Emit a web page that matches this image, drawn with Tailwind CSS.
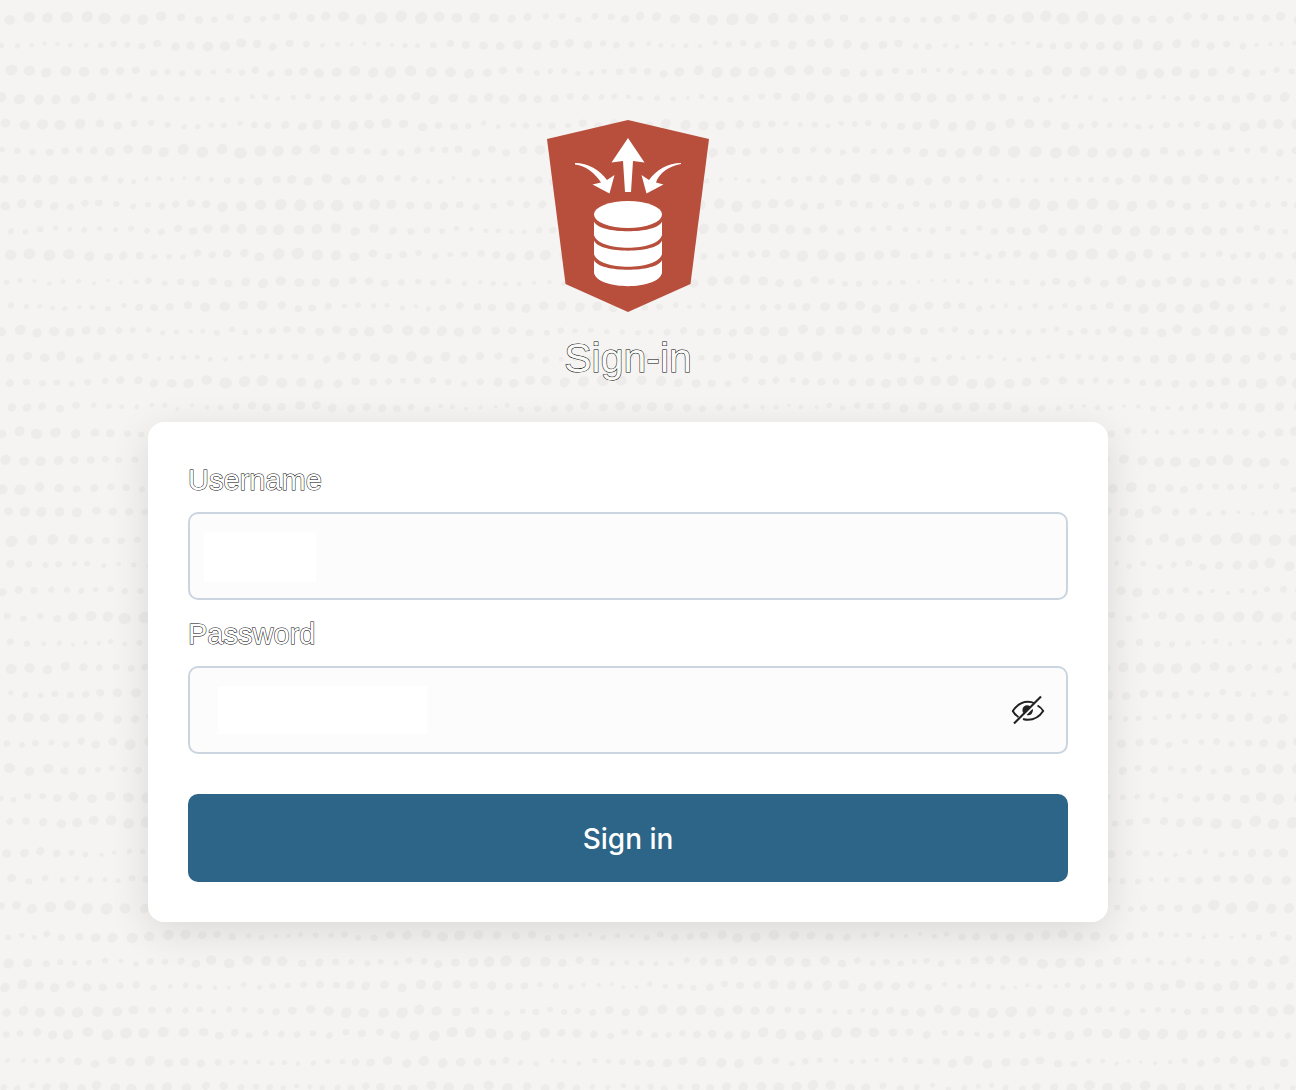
<!DOCTYPE html>
<html lang="en">
<head>
<meta charset="utf-8">
<meta name="viewport" content="width=device-width, initial-scale=1">
<title>Sign-in</title>
<script src="https://cdn.jsdelivr.net/npm/@tailwindcss/browser@4"></script>
</head>
<body class="relative isolate min-h-screen overflow-x-hidden bg-[#f5f4f2] font-['Liberation_Sans',sans-serif]">
<svg id="dots" class="absolute inset-0 -z-10 h-full w-full fill-[#edecea]" aria-hidden="true"></svg>
<main class="flex flex-col items-center pt-30 pr-10 pb-42">
  <svg class="h-48 w-[162px]" viewBox="0 0 162 192" role="img" aria-label="Database logo">
    <path fill="#b84f3c" d="M81 0 162 19 143.500 164 81 192 18.500 164 0 19Z"/>
    <g fill="#fff">
      <path d="M81 18 97.500 42.500 86 41 84 72H78L76 41 64.500 42.500Z"/>
      <path d="M28 43C41 43 53 50 60 60L67.500 55 62.500 73.500 45.500 64.500 54 62.500C48 53 39 46 28 44.500Z"/>
      <path d="M134 43C121 43 109 50 102 60L94.500 55 99.500 73.500 116.500 64.500 109 62.500C112 53 122 46 134 44Z"/>
      <ellipse cx="81" cy="94.500" rx="34" ry="13.500"/>
      <path d="M47 101.500C52 114.500 110 114.500 115 101.500V115C111 132 51 132 47 115Z"/>
      <path d="M47 120.500C52 134 110 134 115 120.500V134C111 151 51 151 47 134Z"/>
      <path d="M47 140C52 153 110 153 115 140V153C111 170.500 51 170.500 47 153Z"/>
    </g>
  </svg>
  <h1 class="mt-5 text-[41px] leading-[52px] text-[#f9f9f8] [paint-order:stroke_fill] [-webkit-text-stroke:1px_#000]">Sign-in</h1>
  <form class="mt-[38px] flex w-full max-w-[960px] flex-col rounded-2xl bg-white p-10 shadow-[0_10px_40px_rgba(0,0,0,0.11)]">
    <label for="username" class="mt-[2px] text-[29px] leading-8 text-white [paint-order:stroke_fill] [-webkit-text-stroke:1px_#000]">Username</label>
    <div class="relative mt-4">
      <input id="username" type="text" class="block h-[88px] w-full rounded-[10px] border-2 border-[#cbd5e0] bg-[#fcfcfc] px-4 text-[28px] text-slate-800">
      <span class="pointer-events-none absolute top-5 left-4 h-[50px] w-28 bg-white"></span>
    </div>
    <label for="password" class="mt-[18px] text-[29px] leading-8 text-white [paint-order:stroke_fill] [-webkit-text-stroke:1px_#000]">Password</label>
    <div class="relative mt-4">
      <input id="password" type="password" class="block h-[88px] w-full rounded-[10px] border-2 border-[#cbd5e0] bg-[#fcfcfc] pr-16 pl-4 text-[28px] text-slate-800">
      <span class="pointer-events-none absolute top-5 left-[30px] h-12 w-[209px] bg-white"></span>
      <button type="button" class="absolute top-[26px] right-[22px] h-9 w-9" aria-label="Show password">
        <svg viewBox="0 0 36 36" class="h-9 w-9" fill="none" stroke="#222" stroke-width="2">
          <path d="M8.500 25C6 23.500 4 21.500 2.800 19 7 12.500 12 9.800 18 9.800c2.500 0 4.600.500 6.600 1.500M27.500 13.500c2.300 1.300 4.400 3.200 5.700 5.500-4 6-9 8.800-15.200 8.800-1.700 0-3.300-.300-5-.800" stroke-linejoin="round"/>
          <path d="M13.800 21.500a4.800 4.800 0 0 1 7-6.800ZM16.500 23a4.800 4.800 0 0 0 6.200-6.200Z" fill="#222" stroke="none"/>
          <path d="M31 4.500 4 31.500" stroke-width="2.200"/>
        </svg>
      </button>
    </div>
    <button type="submit" class="mt-10 h-[88px] rounded-[10px] bg-[#2c6587] pt-[2px] font-['Inter',sans-serif] text-[28px] font-medium text-white">Sign in</button>
  </form>
</main>
<script>
  // Rows of uneven dots whose size swells and fades along each line
  const rows = [18,45,72,98,125,151,180,205,230,255,282,307,331,358,382,407,433,461,488,512,540,565,591,617,643,668,694,718,743,770,798,822,853,880,907,936,962,986,1011,1034,1062,1087];
  let seed = 41;
  const rnd = () => (seed = (seed * 16807) % 2147483647) / 2147483647;
  let out = '';
  for (const y of rows) {
    const phase = rnd() * 6.28, period = 40 + rnd() * 30, base = 3.2 + rnd() * 1.2;
    for (let x = rnd() * 12; x < 2600;) {
      const r = base + 1.2 * Math.sin(x / period + phase) + (rnd() - 0.5) * 0.8;
      const cy = y + (rnd() - 0.5) * 4, a = rnd() * 60 - 50;
      out += `<ellipse cx="${x.toFixed(1)}" cy="${cy.toFixed(1)}" rx="${(r * 1.12).toFixed(1)}" ry="${r.toFixed(1)}" transform="rotate(${a.toFixed(0)} ${x.toFixed(1)} ${cy.toFixed(1)})"/>`;
      x += 8 + r * 1.7 + rnd() * 4;
    }
  }
  document.getElementById('dots').innerHTML = out;
</script>
</body>
</html>
